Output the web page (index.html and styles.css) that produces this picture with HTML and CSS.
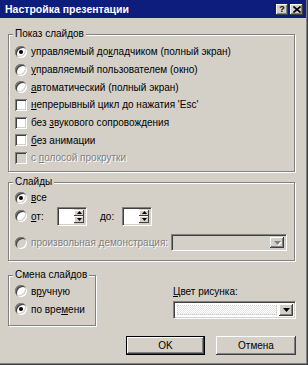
FILE: index.html
```html
<!DOCTYPE html>
<html lang="ru">
<head>
    <meta charset="UTF-8">
    <title>Настройка презентации</title>
    <link rel="stylesheet" href="styles.css">
</head>
<body>
    <div class="window">
        <div class="titlebar">
            <span class="title">Настройка презентации</span>
            <span class="tb-btn">?</span>
            <span class="tb-btn">
                <svg width="8" height="7" viewBox="0 0 8 7"><path d="M0.5 0.5 L7.5 6.5 M7.5 0.5 L0.5 6.5" stroke="#000" stroke-width="1.6"/></svg>
            </span>
        </div>

        <div class="client">
            <div class="group show">
                <div class="group-title">Показ слайдов</div>
                <div class="rows">
                    <div class="row"><span class="radio checked"></span><span>управляемый до<u>к</u>ладчиком (полный экран)</span></div>
                    <div class="row"><span class="radio"></span><span><u>у</u>правляемый пользователем (окно)</span></div>
                    <div class="row"><span class="radio"></span><span><u>а</u>втоматический (полный экран)</span></div>
                    <div class="row"><span class="check"></span><span><u>н</u>епрерывный цикл до нажатия 'Esc'</span></div>
                    <div class="row"><span class="check"></span><span>без <u>з</u>вукового сопровождения</span></div>
                    <div class="row"><span class="check"></span><span><u>б</u>ез анимации</span></div>
                    <div class="row disabled"><span class="check"></span><span>с <u>п</u>олосой прокрутки</span></div>
                </div>
            </div>

            <div class="group slides">
                <div class="group-title">Слайды</div>
                <div class="rows">
                    <div class="row"><span class="radio checked"></span><span><u>в</u>се</span></div>
                    <div class="row spin-row">
                        <span class="radio"></span>
                        <span class="spin-label"><u>о</u>т:</span>
                        <span class="spin">
                            <span class="spin-edit"></span>
                            <span class="spin-arrows">
                                <span class="spin-btn"><svg width="5" height="3" viewBox="0 0 5 3"><path d="M2.5 0 L5 3 L0 3 Z" fill="#000"/></svg></span>
                                <span class="spin-btn"><svg width="5" height="3" viewBox="0 0 5 3"><path d="M0 0 L5 0 L2.5 3 Z" fill="#000"/></svg></span>
                            </span>
                        </span>
                        <span class="spin-label to"><u>д</u>о:</span>
                        <span class="spin">
                            <span class="spin-edit"></span>
                            <span class="spin-arrows">
                                <span class="spin-btn"><svg width="5" height="3" viewBox="0 0 5 3"><path d="M2.5 0 L5 3 L0 3 Z" fill="#000"/></svg></span>
                                <span class="spin-btn"><svg width="5" height="3" viewBox="0 0 5 3"><path d="M0 0 L5 0 L2.5 3 Z" fill="#000"/></svg></span>
                            </span>
                        </span>
                    </div>
                    <div class="row custom-row disabled">
                        <span class="radio"></span><span>произвольная демонстрация:</span>
                        <span class="combo custom">
                            <span class="combo-field"></span>
                            <span class="combo-btn"><svg width="7" height="4" viewBox="0 0 7 4"><path d="M0 0 L7 0 L3.5 4 Z" fill="#808080"/></svg></span>
                        </span>
                    </div>
                </div>
            </div>

            <div class="bottom">
                <div class="group advance">
                    <div class="group-title">Смена слайдов</div>
                    <div class="rows">
                        <div class="row"><span class="radio"></span><span>в<u>р</u>учную</span></div>
                        <div class="row"><span class="radio checked"></span><span>по вре<u>м</u>ени</span></div>
                    </div>
                </div>
                <div class="pen">
                    <div class="pen-label"><u>Ц</u>вет рисунка:</div>
                    <span class="combo color">
                        <span class="combo-field"><span class="swatch"></span></span>
                        <span class="combo-btn"><svg width="7" height="4" viewBox="0 0 7 4"><path d="M0 0 L7 0 L3.5 4 Z" fill="#000"/></svg></span>
                    </span>
                </div>
            </div>

            <div class="actions">
                <button class="button default">OK</button>
                <button class="button">Отмена</button>
            </div>
        </div>
    </div>
</body>
</html>
```

FILE: styles.css
```css
body {
    margin: 0;
    background: #d4d0c8;
    font-family: 'Liberation Sans', 'DejaVu Sans', sans-serif;
    font-size: 10px;
    color: #000;
}
.window {
    width: 308px;
    height: 365px;
    box-sizing: border-box;
    padding: 0 2px 2px 0;
    background: #d4d0c8;
    box-shadow: inset -1px -1px #404040, inset -2px -2px #808080;
}
.titlebar {
    height: 18px;
    display: flex;
    align-items: center;
    padding: 0 3px 0 5px;
    background: #0c1d7d;
    color: #fff;
    font-weight: bold;
    font-size: 10.5px;
}
.title {
    flex: 1;
}
.tb-btn {
    width: 12px;
    height: 11px;
    margin-left: 2px;
    display: flex;
    align-items: center;
    justify-content: center;
    background: #d4d0c8;
    color: #000;
    font-size: 9px;
    box-shadow: inset -1px -1px #404040, inset 1px 1px #fff, inset -2px -2px #808080;
}
.tb-btn:last-child {
    width: 13px;
}
.client {
    padding: 16px 10px 0 8px;
}
.group {
    box-sizing: border-box;
    border: 1px solid #808080;
    box-shadow: inset 1px 1px #fff, 1px 1px #fff;
    margin-right: 1px;
}
.group-title {
    width: fit-content;
    height: 14px;
    line-height: 14px;
    margin: -8px 0 0 4px;
    padding: 0 2px;
    background: #d4d0c8;
}
.rows {
    padding: 2px 0 0 6px;
}
.row {
    display: flex;
    align-items: center;
    height: 17.7px;
    white-space: nowrap;
}
.radio {
    position: relative;
    width: 12px;
    height: 12px;
    margin-right: 4px;
    flex: none;
    border-radius: 50%;
    background: #fff;
    box-shadow: inset 1px 1px #808080, inset -1px -1px #fff, inset 2px 2px #404040, inset -2px -2px #d4d0c8;
}
.radio.checked::after {
    content: '';
    position: absolute;
    left: 4px;
    top: 4px;
    width: 4px;
    height: 4px;
    border-radius: 50%;
    background: #000;
}
.check {
    width: 12px;
    height: 12px;
    margin-right: 4px;
    flex: none;
    background: #fff;
    box-shadow: inset 1px 1px #808080, inset -1px -1px #fff, inset 2px 2px #404040, inset -2px -2px #d4d0c8;
}
.disabled {
    color: #808080;
    text-shadow: 1px 1px #fff;
}
.disabled .check,
.disabled .radio {
    background: #d4d0c8;
}
.show {
    height: 138px;
}
.slides {
    height: 79px;
    margin-top: 10px;
}
.slides .rows {
    padding-top: 0;
}
.spin-row {
    height: 19px;
}
.spin-label {
    width: 26px;
}
.spin-label.to {
    width: 22px;
    margin-left: 13px;
}
.spin {
    display: flex;
    height: 19px;
    width: 30px;
    box-sizing: border-box;
    border: 1px solid;
    border-color: #808080 #fff #fff #808080;
    box-shadow: inset 1px 1px #404040, inset -1px -1px #d4d0c8;
    padding: 2px 2px 2px 0;
}
.spin-edit {
    flex: 1;
    background: #fff;
    margin: -1px 0 -1px 1px;
}
.spin-arrows {
    width: 10px;
    display: flex;
    flex-direction: column;
}
.spin-btn {
    flex: 1;
    display: flex;
    align-items: center;
    justify-content: center;
    background: #d4d0c8;
    box-shadow: inset -1px -1px #404040, inset 1px 1px #fff;
}
.custom-row {
    margin-top: 8px;
}
.combo {
    display: flex;
    box-sizing: border-box;
    border: 1px solid;
    border-color: #808080 #fff #fff #808080;
    box-shadow: inset 1px 1px #404040, inset -1px -1px #d4d0c8;
    padding: 2px;
}
.combo.custom {
    width: 116px;
    height: 17px;
    margin-left: auto;
    margin-right: 7px;
}
.combo-field {
    flex: 1;
}
.combo-btn {
    width: 14px;
    display: flex;
    align-items: center;
    justify-content: center;
    background: #d4d0c8;
    box-shadow: inset -1px -1px #404040, inset 1px 1px #fff, inset -2px -2px #808080;
}
.disabled .combo-btn svg {
    filter: drop-shadow(1px 1px 0 #fff);
}
.bottom {
    display: flex;
    margin-top: 14px;
}
.advance {
    width: 88px;
    height: 51px;
}
.advance .rows {
    padding-top: 0;
}
.advance .row {
    height: 18px;
}
.pen {
    width: 123px;
    margin-left: auto;
    align-self: flex-end;
    margin-bottom: 7px;
}
.pen-label {
    height: 16px;
    line-height: 14px;
}
.combo.color {
    height: 18px;
    background: #fff;
}
.combo.color .combo-field {
    padding: 1px 2px 1px 1px;
    display: flex;
}
.swatch {
    flex: 1;
    border: 1px dotted #c8c8c8;
    background: repeating-conic-gradient(#e4e4e4 0 25%, #fff 0 50%) 0 0 / 2px 2px;
}
.actions {
    display: flex;
    justify-content: flex-end;
    gap: 11px;
    margin-top: 10px;
}
.button {
    width: 80px;
    height: 19px;
    padding: 0;
    border: none;
    background: #d4d0c8;
    font-family: inherit;
    font-size: 10px;
    color: #000;
    box-shadow: inset -1px -1px #404040, inset 1px 1px #fff, inset -2px -2px #808080, inset 2px 2px #d4d0c8;
}
.button.default {
    width: 79px;
    border: 1px solid #000;
}
```
